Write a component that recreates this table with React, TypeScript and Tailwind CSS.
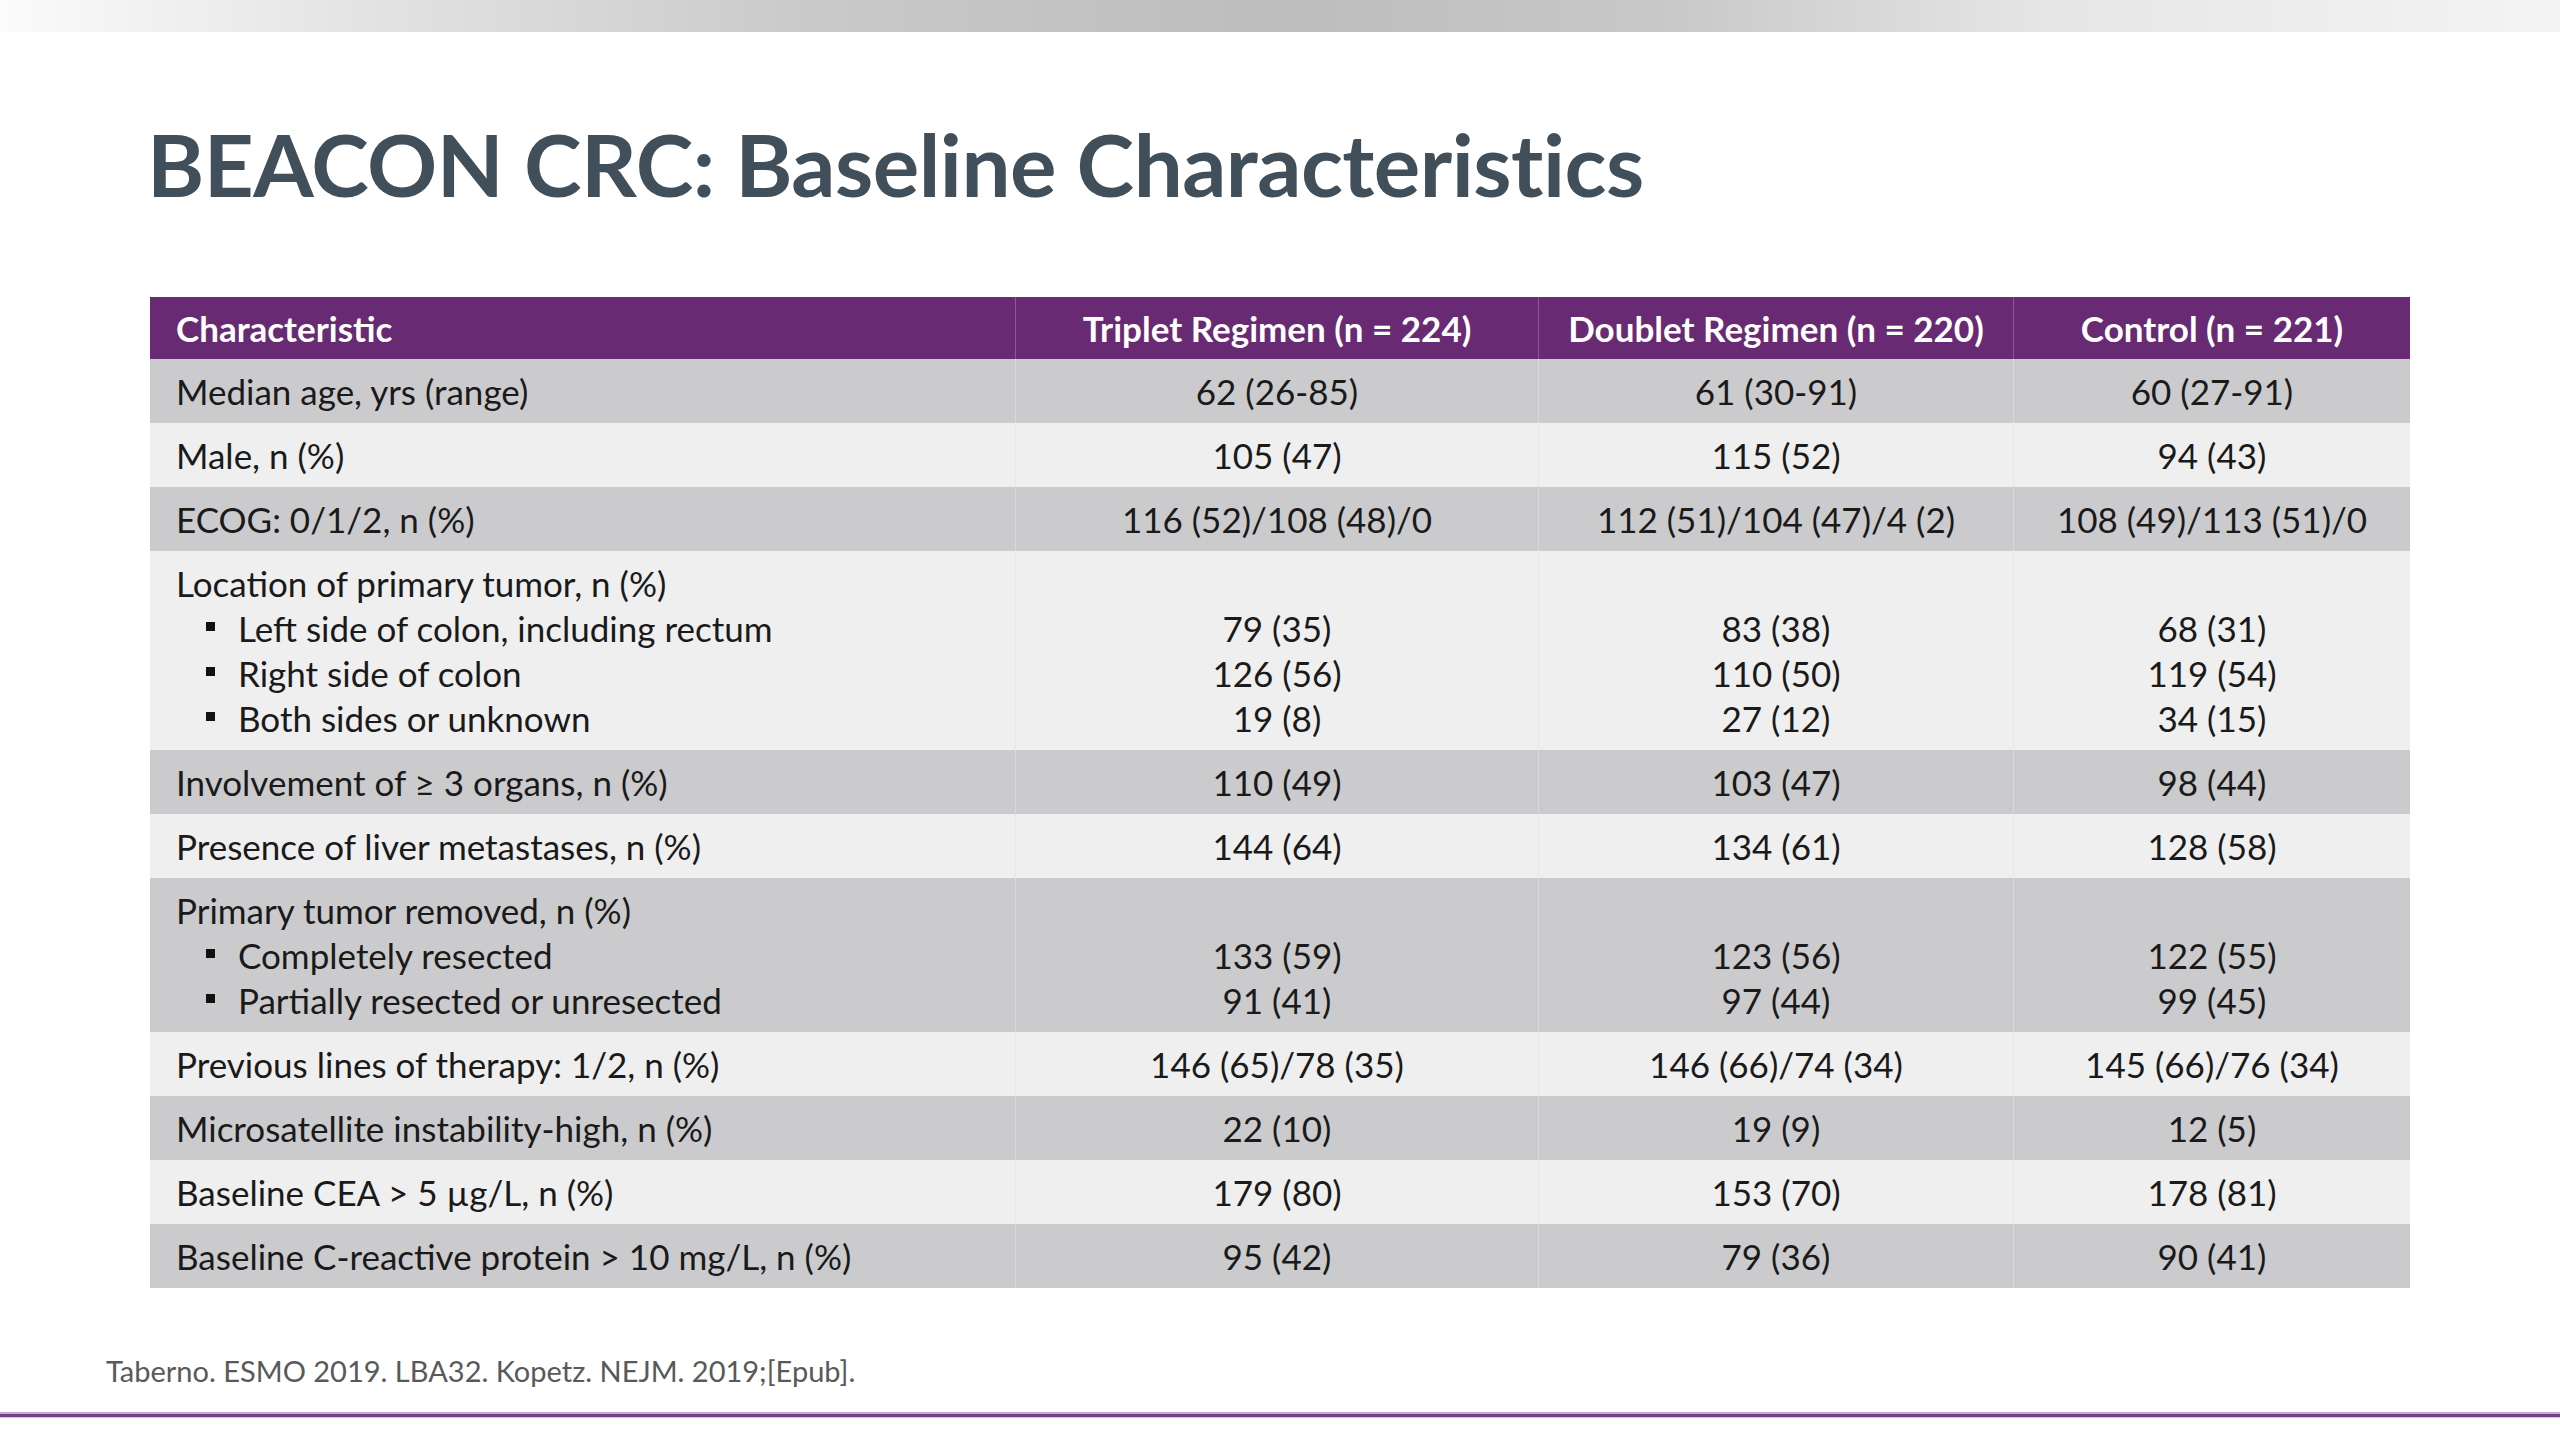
import React from "react";

type Row = {
  label: string;
  subs?: string[];
  vals: string[][];
  dark: boolean;
};

const rows: Row[] = [
  { label: "Median age, yrs (range)", vals: [["62 (26-85)"], ["61 (30-91)"], ["60 (27-91)"]], dark: true },
  { label: "Male, n (%)", vals: [["105 (47)"], ["115 (52)"], ["94 (43)"]], dark: false },
  { label: "ECOG: 0/1/2, n (%)", vals: [["116 (52)/108 (48)/0"], ["112 (51)/104 (47)/4 (2)"], ["108 (49)/113 (51)/0"]], dark: true },
  {
    label: "Location of primary tumor, n (%)",
    subs: ["Left side of colon, including rectum", "Right side of colon", "Both sides or unknown"],
    vals: [["79 (35)", "126 (56)", "19 (8)"], ["83 (38)", "110 (50)", "27 (12)"], ["68 (31)", "119 (54)", "34 (15)"]],
    dark: false,
  },
  { label: "Involvement of \u2265 3 organs, n (%)", vals: [["110 (49)"], ["103 (47)"], ["98 (44)"]], dark: true },
  { label: "Presence of liver metastases, n (%)", vals: [["144 (64)"], ["134 (61)"], ["128 (58)"]], dark: false },
  {
    label: "Primary tumor removed, n (%)",
    subs: ["Completely resected", "Partially resected or unresected"],
    vals: [["133 (59)", "91 (41)"], ["123 (56)", "97 (44)"], ["122 (55)", "99 (45)"]],
    dark: true,
  },
  { label: "Previous lines of therapy: 1/2, n (%)", vals: [["146 (65)/78 (35)"], ["146 (66)/74 (34)"], ["145 (66)/76 (34)"]], dark: false },
  { label: "Microsatellite instability-high, n (%)", vals: [["22 (10)"], ["19 (9)"], ["12 (5)"]], dark: true },
  { label: "Baseline CEA > 5 \u00b5g/L, n (%)", vals: [["179 (80)"], ["153 (70)"], ["178 (81)"]], dark: false },
  { label: "Baseline C-reactive protein > 10 mg/L, n (%)", vals: [["95 (42)"], ["79 (36)"], ["90 (41)"]], dark: true },
];

export default function App() {
  return (
    <div
      className="w-[2560px] h-[1440px] bg-white flex flex-col overflow-hidden"
      style={{ fontFamily: "Lato, 'Noto Sans', sans-serif" }}
    >
      <div className="h-[32px] w-full bg-[linear-gradient(to_right,#fbfbfb_0%,#e2e2e2_15%,#c9c9c9_32%,#bdbdbd_50%,#c8c8c8_65%,#e6e6e6_80%,#f4f4f4_100%)]" />

      <div className="pl-[147px] pt-[82px] h-[265px]">
        <h1 className="text-[87px] leading-[100px] font-bold text-[#414f5b] tracking-[-0.5px]">
          BEACON CRC: Baseline Characteristics
        </h1>
      </div>

      <div className="ml-[150px] w-[2260px] text-[35px] text-[#1a1a1a]">
        <div className="grid grid-cols-[865px_523px_475px_397px] bg-[#682a73] text-white font-bold h-[62px] items-stretch">
          <div className="pl-[26px] flex items-center">Characteristic</div>
          <div className="flex items-center justify-center border-l border-[#8a5a93]">Triplet Regimen (n = 224)</div>
          <div className="flex items-center justify-center border-l border-[#8a5a93]">Doublet Regimen (n = 220)</div>
          <div className="flex items-center justify-center border-l border-[#8a5a93]">Control (n = 221)</div>
        </div>
        {rows.map((r, i) => (
          <div
            key={i}
            className={`grid grid-cols-[865px_523px_475px_397px] leading-[45px] ${r.dark ? "bg-[#cbcbcd]" : "bg-[#efefef]"}`}
          >
            <div className="pl-[26px] py-[9.5px]">
              <div>{r.label}</div>
              {r.subs?.map((s, j) => (
                <div key={j} className="flex items-center">
                  <span className="ml-[30px] w-[9px] h-[9px] bg-[#111111] mb-[4px]" />
                  <span className="pl-[23px]">{s}</span>
                </div>
              ))}
            </div>
            {r.vals.map((col, c) => (
              <div
                key={c}
                className={`py-[9.5px] text-center border-l ${r.dark ? "border-[#d9d9db]" : "border-[#e6e6e6]"}`}
              >
                {r.subs && <div>&nbsp;</div>}
                {col.map((v, k) => (
                  <div key={k}>{v}</div>
                ))}
              </div>
            ))}
          </div>
        ))}
      </div>

      <div className="flex-1" />
      <div className="pl-[106px] text-[29px] text-[#595959] leading-[32px] mb-[25px]">
        Taberno. ESMO 2019. LBA32. Kopetz. NEJM. 2019;[Epub].
      </div>
      <div className="h-[2px] bg-[#c9a9cf]" />
      <div className="h-[3px] bg-[#7a3e86]" />
      <div className="h-[1px] bg-[#d7c2db]" />
      <div className="h-[22px]" />
    </div>
  );
}
